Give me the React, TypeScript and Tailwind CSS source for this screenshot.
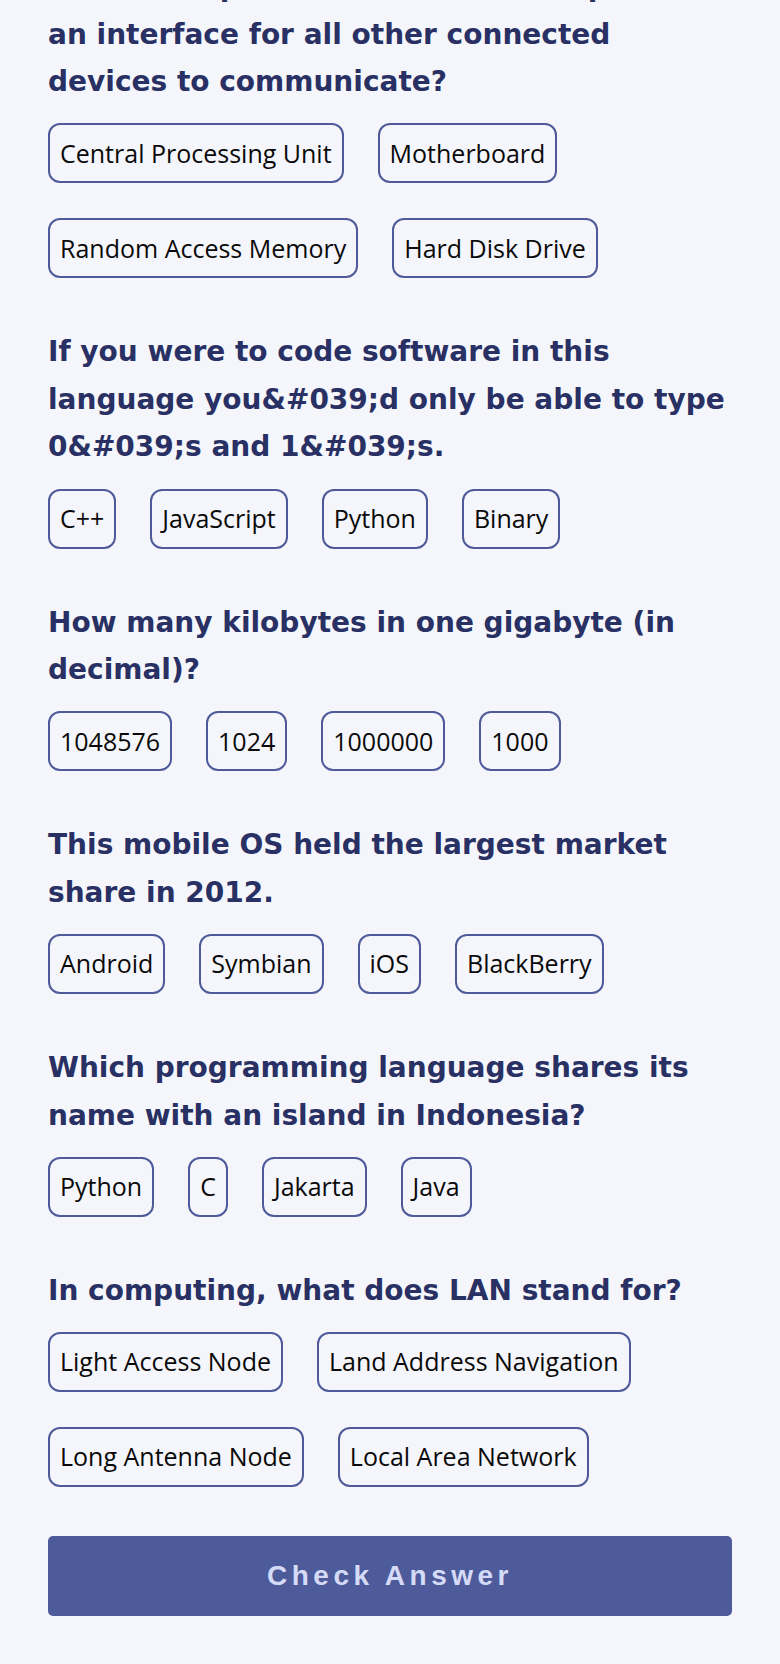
import React from "react";

type Question = { lines: string[]; answers: string[] };

const questions: Question[] = [
  {
    lines: [
      "Which computer hardware device provides",
      "an interface for all other connected",
      "devices to communicate?",
    ],
    answers: ["Central Processing Unit", "Motherboard", "Random Access Memory", "Hard Disk Drive"],
  },
  {
    lines: [
      "If you were to code software in this",
      "language you&#039;d only be able to type",
      "0&#039;s and 1&#039;s.",
    ],
    answers: ["C++", "JavaScript", "Python", "Binary"],
  },
  {
    lines: ["How many kilobytes in one gigabyte (in", "decimal)?"],
    answers: ["1048576", "1024", "1000000", "1000"],
  },
  {
    lines: ["This mobile OS held the largest market", "share in 2012."],
    answers: ["Android", "Symbian", "iOS", "BlackBerry"],
  },
  {
    lines: ["Which programming language shares its", "name with an island in Indonesia?"],
    answers: ["Python", "C", "Jakarta", "Java"],
  },
  {
    lines: ["In computing, what does LAN stand for?"],
    answers: ["Light Access Node", "Land Address Navigation", "Long Antenna Node", "Local Area Network"],
  },
];

export default function App() {
  return (
    <div className="min-h-screen overflow-hidden bg-[#f5f6fb]">
      <div className="-mt-[37px] px-[48px] pb-[48px]">
        <div className="flex flex-col gap-[50px]">
          {questions.map((q, i) => (
            <section key={i} className="flex flex-col gap-[17.5px]">
              <h2 className="font-['DejaVu_Sans',sans-serif] text-[28px] font-bold leading-[47.6px] text-[#283064]">
                {q.lines.map((l, j) => (
                  <span key={j} className="block whitespace-nowrap">
                    {l}
                  </span>
                ))}
              </h2>
              <div className="flex flex-wrap gap-x-[34px] gap-y-[35px]">
                {q.answers.map((a) => (
                  <button
                    key={a}
                    className="flex h-[60px] items-center rounded-[12px] border-2 border-[#4e5a99] px-[10px] font-['Open_Sans',sans-serif] text-[25px] text-[#0a0a0a]"
                  >
                    {a}
                  </button>
                ))}
              </div>
            </section>
          ))}
        </div>
        <button className="mt-[49px] flex h-[80px] w-full items-center justify-center rounded-[5px] bg-[#4d5b9b] font-['Liberation_Sans',Arial,sans-serif] text-[28px] font-bold tracking-[4.5px] text-[#d5dbf7]">
          Check Answer
        </button>
      </div>
    </div>
  );
}
